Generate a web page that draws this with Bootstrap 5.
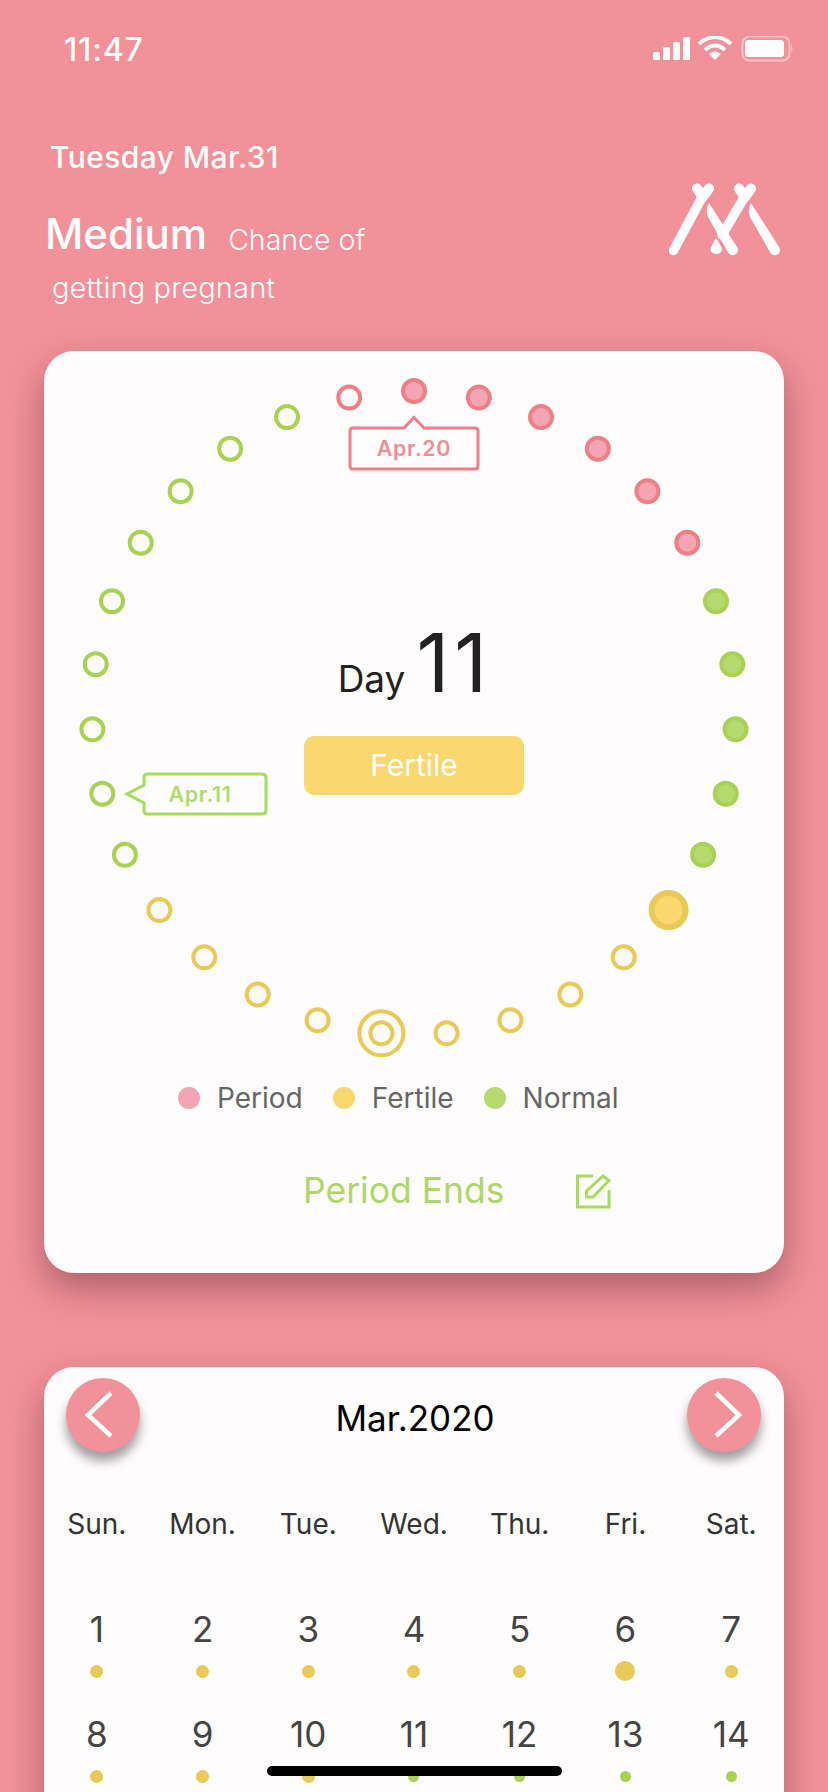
<!DOCTYPE html>
<html lang="en">
<head>
    <meta charset="UTF-8">
    <meta name="viewport" content="width=device-width, initial-scale=1.0">
    <title>Cycle tracker</title>
    <link href="https://cdn.jsdelivr.net/npm/bootstrap@5.3.0/dist/css/bootstrap.min.css" rel="stylesheet">
    <style>
        body {
            background: #f29199;
            width: 828px;
            height: 1792px;
            overflow: hidden;
            font-family: Inter, "Liberation Sans", sans-serif;
            color: #fff;
            position: relative;
        }

        /* status bar */
        .ph-status { height: 98px; padding: 0 34px 0 64px; }
        .ph-time { font-size: 32px; font-weight: 500; letter-spacing: 0.8px; line-height: 36px; padding-top: 2px; }

        /* header */
        .ph-head { height: 253px; }
        .ph-date { font-size: 30px; font-weight: 500; letter-spacing: 0.4px; line-height: 34px; margin: 42px 0 0 50px; }
        .ph-level-line { margin: 36px 0 0 45px; line-height: 48px; }
        .ph-level { font-size: 42px; font-weight: 500; }
        .ph-chance { font-size: 28.5px; font-weight: 300; margin-left: 21px; position: relative; top: 1px; }
        .ph-chance-2 { font-size: 29px; font-weight: 300; letter-spacing: 0.15px; line-height: 34px; margin: 8px 0 0 52px; }
        .ph-logo { margin: 84px 47px 0 0; }

        /* cards */
        .ph-card {
            margin: 0 44px;
            width: 740px;
            background: #fffcfd;
            border: 0;
            border-radius: 30px;
            box-shadow: 0 16px 36px rgba(60, 20, 30, 0.38);
        }
        .ph-cycle { height: 922px; }
        .ph-stage { height: 709px; }
        .ph-ring { position: absolute; left: 0; top: 0; }
        .ph-ring text { font-family: Inter, "Liberation Sans", sans-serif; font-size: 21.5px; font-weight: 600; letter-spacing: 0.6px; }
        .ph-center { padding-top: 264px; color: #222; }
        .ph-day-line { line-height: 96px; height: 96px; margin-left: 2px; }
        .ph-day { font-size: 37px; margin-right: 11px; }
        .ph-day-num { font-size: 81px; letter-spacing: 5px; }
        .ph-phase {
            width: 220px;
            height: 59px;
            margin-top: 25px;
            background: #fad76f;
            border-radius: 10px;
            color: #fff;
            font-size: 30px;
        }
        .ph-legend { padding: 21px 0 0 134px; gap: 30px; font-size: 28px; color: #666; line-height: 34px; }
        .ph-legend-dot { width: 22px; height: 22px; border-radius: 50%; margin-right: 17px; }
        .ph-legend-dot.is-period { background: #f3a5b3; }
        .ph-legend-dot.is-fertile { background: #fad76f; }
        .ph-legend-dot.is-normal { background: #b5da6f; }
        .ph-ends { padding: 55px 0 0 259px; gap: 71px; color: #aed668; font-size: 35.5px; line-height: 42px; }

        .ph-calendar { margin-top: 94px; height: 500px; }
        .ph-cal-head { padding: 11px 23px 0 22px; height: 105px; }
        .ph-nav {
            width: 74px;
            height: 74px;
            padding: 0;
            border: 0;
            border-radius: 50%;
            background: #f29199;
            box-shadow: 0 9px 11px rgba(0, 0, 0, 0.38);
        }
        .ph-month { font-size: 35px; color: #000; line-height: 80px; margin-left: 3px; }
        .ph-week { font-size: 28px; color: #333; line-height: 34px; margin-top: 35px; }
        .ph-days { margin-top: 68px; color: #444; }
        .ph-cell { width: 14.2857%; height: 105px; }
        .ph-num { font-size: 35px; line-height: 40px; }
        .ph-dot { width: 13px; height: 13px; border-radius: 50%; margin-top: 16px; }
        .ph-dot.is-big { width: 20px; height: 20px; margin-top: 12px; }
        .ph-dot.is-green { width: 11px; height: 11px; background: #a9d154; margin-top: 17px; }
        .ph-dot.is-yellow { background: #e9c957; }

        .ph-home {
            position: absolute;
            left: 267px;
            bottom: 16px;
            width: 295px;
            height: 10px;
            background: #000;
            border-radius: 5px;
        }
    </style>
</head>
<body>
    <div class="ph-status d-flex align-items-center justify-content-between">
        <span class="ph-time">11:47</span>
        <svg width="141" height="26" viewBox="653 37 141 26" fill="#fff">
            <rect x="653" y="53" width="7" height="8" rx="1.5"/>
            <rect x="663" y="48" width="7" height="13" rx="1.5"/>
            <rect x="673" y="43" width="7" height="18" rx="1.5"/>
            <rect x="683" y="38" width="7" height="23" rx="1.5"/>
            <path d="M699 45 Q715 31 731 45" fill="none" stroke="#fff" stroke-width="4"/>
            <path d="M705 51 Q715 42 725 51" fill="none" stroke="#fff" stroke-width="4"/>
            <path d="M715 61 L709 55 Q715 50 721 55 Z"/>
            <rect x="742.5" y="37.5" width="47" height="24" rx="7" fill="none" stroke="#fff" stroke-opacity="0.45" stroke-width="2"/>
            <rect x="745" y="41" width="39" height="17" rx="3.5"/>
            <path d="M791 45 Q794 49.5 791 54 Z" fill-opacity="0.45"/>
        </svg>
    </div>

    <div class="ph-head d-flex justify-content-between">
        <div>
            <div class="ph-date">Tuesday Mar.31</div>
            <div class="ph-level-line d-flex align-items-baseline">
                <span class="ph-level">Medium</span>
                <span class="ph-chance">Chance of</span>
            </div>
            <div class="ph-chance-2">getting pregnant</div>
        </div>
        <svg class="ph-logo" width="112" height="74" viewBox="669 182 112 74" fill="#fff" stroke="#fff" stroke-linecap="round">
            <path d="M702.7 196 L673.5 250.5" stroke-width="9.5" fill="none"/>
            <path d="M702.7 197 L697 188.5 M702.7 197 L709 188.5" stroke-width="10" fill="none"/>
            <path d="M745 196 L722 235" stroke-width="9.5" fill="none"/>
            <path d="M745 197 L739 188.5 M745 197 L751 188.5" stroke-width="10" fill="none"/>
            <path d="M709 203 L737 247 A5 5 0 0 1 728.5 253 L708 217 Q705 210 709 203 Z" stroke="none"/>
            <path d="M751 203 L779 247 A5 5 0 0 1 770.5 253 L750 217 Q747 210 751 203 Z" stroke="none"/>
            <path d="M716 238 Q722 247 722 250 A6 5.5 0 0 1 710.5 250 Q710.5 247 716 238 Z" stroke="none"/>
        </svg>
    </div>

    <div class="card ph-card ph-cycle">
        <div class="ph-stage position-relative">
            <svg class="ph-ring" id="ring" width="740" height="709" viewBox="44 351 740 709"></svg>
            <div class="ph-center position-relative d-flex flex-column align-items-center">
                <div class="ph-day-line d-flex align-items-baseline">
                    <span class="ph-day">Day</span>
                    <span class="ph-day-num">11</span>
                </div>
                <div class="ph-phase d-flex align-items-center justify-content-center">Fertile</div>
            </div>
        </div>
        <div class="ph-legend d-flex align-items-center">
            <div class="d-flex align-items-center"><span class="ph-legend-dot is-period"></span>Period</div>
            <div class="d-flex align-items-center"><span class="ph-legend-dot is-fertile"></span>Fertile</div>
            <div class="d-flex align-items-center"><span class="ph-legend-dot is-normal"></span>Normal</div>
        </div>
        <div class="ph-ends d-flex align-items-center">
            <span>Period Ends</span>
            <svg width="35" height="35" viewBox="0 0 35 35" fill="none" stroke="#a5dc5c" stroke-width="3">
                <path d="M17 2 H1.5 V33 H33 V16"/>
                <path d="M10.5 17 L27 2 L33 6.5 L17 23 H10.5 Z"/>
            </svg>
        </div>
    </div>

    <div class="card ph-card ph-calendar">
        <div class="ph-cal-head d-flex justify-content-between">
            <button class="ph-nav" type="button" aria-label="Previous">
                <svg width="74" height="74" viewBox="0 0 74 74" fill="none" stroke="#fff" stroke-width="4.5"><path d="M45 15 L22 37 L45 58"/></svg>
            </button>
            <div class="ph-month">Mar.2020</div>
            <button class="ph-nav" type="button" aria-label="Next">
                <svg width="74" height="74" viewBox="0 0 74 74" fill="none" stroke="#fff" stroke-width="4.5"><path d="M29 15 L52 37 L29 58"/></svg>
            </button>
        </div>
        <div class="row g-0 text-center ph-week">
            <div class="col">Sun.</div><div class="col">Mon.</div><div class="col">Tue.</div><div class="col">Wed.</div><div class="col">Thu.</div><div class="col">Fri.</div><div class="col">Sat.</div>
        </div>
        <div class="row g-0 ph-days" id="days"></div>
    </div>

    <div class="ph-home"></div>

    <script>
        // 31 day cycle around the ring, clockwise from the top dot
        const PINK = ['#ee7f87', '#f3a5b3'], GREEN = ['#a9d154', '#b5da6f'], YELLOW = ['#e9c957', '#fad76f'];
        const cx = 414, cy = 713, radius = 322;
        let svg = '';

        for (let i = 0; i < 31; i++) {
            const a = i * 2 * Math.PI / 31;
            const x = (cx + radius * Math.sin(a)).toFixed(1);
            const y = (cy - radius * Math.cos(a)).toFixed(1);
            let c = YELLOW, filled = false;
            if (i <= 5) { c = PINK; filled = true; }
            else if (i <= 10) { c = GREEN; filled = true; }
            else if (i >= 21 && i <= 29) { c = GREEN; }
            else if (i === 30) { c = PINK; }

            if (i === 11) {
                svg += `<circle cx="${x}" cy="${y}" r="17" fill="${c[1]}" stroke="${c[0]}" stroke-width="6"/>`;
            } else {
                if (i === 16) {
                    svg += `<circle cx="${x}" cy="${y}" r="22" fill="none" stroke="${c[0]}" stroke-width="4"/>`;
                }
                svg += `<circle cx="${x}" cy="${y}" r="11" fill="${filled ? c[1] : '#fffcfd'}" stroke="${c[0]}" stroke-width="4"/>`;
            }
        }

        svg += `<path d="M353 428 H404 L414 417.5 L424 428 H475 Q478 428 478 431 V466 Q478 469 475 469 H353 Q350 469 350 466 V431 Q350 428 353 428 Z" fill="#fffcfd" stroke="#ee7f87" stroke-width="3"/>`;
        svg += `<text x="414" y="456" text-anchor="middle" fill="#ee8f96">Apr.20</text>`;
        svg += `<path d="M147 774 H262 Q266 774 266 778 V810 Q266 814 262 814 H147 Q144 814 144 810 V803 L127 794 L144 785 V778 Q144 774 147 774 Z" fill="#fffcfd" stroke="#a5dc5c" stroke-width="3"/>`;
        svg += `<text x="200" y="802" text-anchor="middle" fill="#aedd6b">Apr.11</text>`;
        document.getElementById('ring').innerHTML = svg;

        // March 2020, two weeks are on screen
        let cells = '';
        for (let d = 1; d <= 14; d++) {
            let dot = 'is-yellow';
            if (d === 6) dot = 'is-yellow is-big';
            if (d >= 11) dot = 'is-green';
            cells += `<div class="ph-cell d-flex flex-column align-items-center"><span class="ph-num">${d}</span><span class="ph-dot ${dot}"></span></div>`;
        }
        document.getElementById('days').innerHTML = cells;
    </script>
    <script src="https://cdn.jsdelivr.net/npm/bootstrap@5.3.0/dist/js/bootstrap.bundle.min.js"></script>
</body>
</html>
